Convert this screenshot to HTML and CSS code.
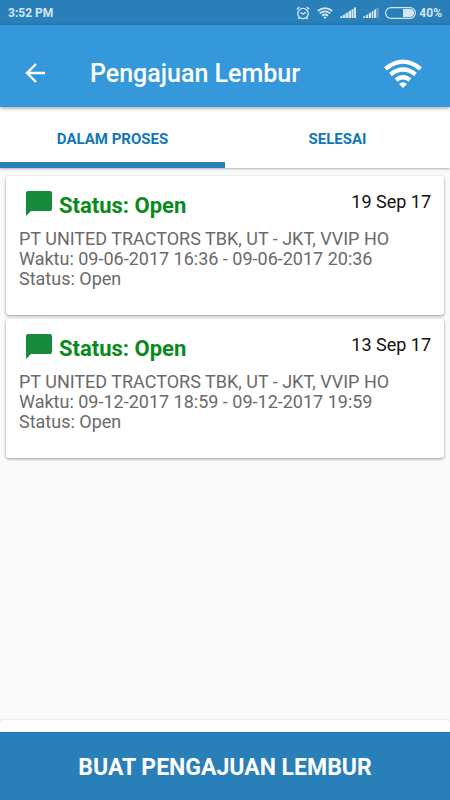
FILE: index.html
```
<!DOCTYPE html>
<html lang="id">
	<head>
		<meta charset="UTF-8">
		<meta name="viewport" content="width=device-width, initial-scale=1">
		<title>Pengajuan Lembur</title>
		<link rel="stylesheet" href="styles.css">
	</head>
	<body>
		<div class="statusbar">
			<span class="clock">3:52 PM</span>
			<svg class="alarm" width="14" height="14" viewBox="0 0 14 14" fill="none" stroke="currentColor" stroke-width="1.3">
				<circle cx="7" cy="7.5" r="5.2"/>
				<path d="M4.5 6.2L7 8.2L9.8 6.2M.8 3.2L3.4 1M13.2 3.2L10.6 1M3.2 11.8L2 13.2M10.8 11.8L12 13.2"/>
			</svg>
			<svg class="wifi-small" width="16" height="12" viewBox="0 0 38 29" fill="none" stroke="currentColor" stroke-width="4.4">
				<path d="M1.5 9.8Q19-4.5 36.5 9.8M6.5 15.5Q19 5.5 31.5 15.5M12 21Q19 15.5 26 21"/>
				<path d="M15 25Q19 21.5 23 25L19 29Z" fill="currentColor" stroke="none"/>
			</svg>
			<svg class="signal" width="16" height="11" viewBox="0 0 16 11" fill="currentColor">
				<path d="M0 11V10L2 9V11ZM3 11V8.5L5 7.5V11ZM6 11V6.5L8 5.2V11ZM9 11V4.5L11 3.2V11ZM12 11V2.5L13 2V11ZM14 11V1L16 0V11Z"/>
				<path d="M0 11V10L16 0V11Z" opacity=".5"/>
			</svg>
			<svg class="signal" width="16" height="11" viewBox="0 0 16 11" fill="currentColor">
				<path d="M0 11V10L2 9V11ZM3 11V8.5L5 7.5V11ZM6 11V6.5L8 5.2V11ZM9 11V4.5L10 4V11ZM11 11V3.2L13 2V11Z"/>
				<path d="M0 11V10L16 0V11Z" opacity=".3"/>
			</svg>
			<svg class="battery" width="31" height="12" viewBox="0 0 31 12">
				<rect x=".6" y=".6" width="29.8" height="10.8" rx="5.4" fill="none" stroke="currentColor" stroke-width="1.2"/>
				<path d="M18 2H25A4 4 0 0 1 25 10H18Z" fill="currentColor"/>
			</svg>
			<span class="percent">40%</span>
		</div>
		<header class="appbar">
			<button class="back" type="button" aria-label="Kembali">
				<svg width="20" height="20" viewBox="0 0 20 20" fill="none" stroke="currentColor" stroke-width="2.4">
					<path d="M20 10H2M11 1L2 10L11 19"/>
				</svg>
			</button>
			<h1 class="title">Pengajuan Lembur</h1>
			<svg class="wifi" width="38" height="29" viewBox="0 0 38 29" fill="none" stroke="currentColor" stroke-width="4.2">
				<path d="M1.5 9.8Q19-4.5 36.5 9.8M6.5 15.5Q19 5.5 31.5 15.5M12 21Q19 15.5 26 21"/>
				<path d="M15 25Q19 21.5 23 25L19 29Z" fill="currentColor" stroke="none"/>
			</svg>
		</header>
		<nav class="tabs">
			<button class="tab active" type="button">DALAM PROSES</button>
			<button class="tab" type="button">SELESAI</button>
		</nav>
		<main class="list">
			<article class="card">
				<div class="card-top">
					<svg class="bubble" width="26" height="25" viewBox="0 0 26 25" fill="currentColor">
						<path d="M2 0H24Q26 0 26 2V18Q26 20 24 20H5L0 25V2Q0 0 2 0Z"/>
					</svg>
					<h2 class="status">Status: Open</h2>
					<time class="date" datetime="2017-09-19">19 Sep 17</time>
				</div>
				<p class="detail">PT UNITED TRACTORS TBK, UT - JKT, VVIP HO</p>
				<p class="detail">Waktu: 09-06-2017 16:36 - 09-06-2017 20:36</p>
				<p class="detail">Status: Open</p>
			</article>
			<article class="card">
				<div class="card-top">
					<svg class="bubble" width="26" height="25" viewBox="0 0 26 25" fill="currentColor">
						<path d="M2 0H24Q26 0 26 2V18Q26 20 24 20H5L0 25V2Q0 0 2 0Z"/>
					</svg>
					<h2 class="status">Status: Open</h2>
					<time class="date" datetime="2017-09-13">13 Sep 17</time>
				</div>
				<p class="detail">PT UNITED TRACTORS TBK, UT - JKT, VVIP HO</p>
				<p class="detail">Waktu: 09-12-2017 18:59 - 09-12-2017 19:59</p>
				<p class="detail">Status: Open</p>
			</article>
		</main>
		<footer class="bottom">
			<button class="create" type="button">BUAT PENGAJUAN LEMBUR</button>
		</footer>
	</body>
</html>
```
FILE: styles.css
```
* {
	box-sizing: border-box;
}
body {
	margin: 0;
	min-height: 100vh;
	display: flex;
	flex-direction: column;
	background: #fafafa;
	font-family: Roboto, "Liberation Sans", sans-serif;
}
h1, h2, p {
	margin: 0;
}
button {
	border: 0;
	padding: 0;
	background: none;
	font-family: inherit;
	cursor: pointer;
}
.statusbar {
	display: flex;
	align-items: center;
	height: 25px;
	padding: 0 8px;
	background: #2980b9;
	color: #d4e6f1;
	font-size: 12px;
	font-weight: 700;
}
.clock {
	flex: 1;
}
.wifi-small {
	margin-left: 7px;
}
.signal {
	margin-left: 7px;
}
.battery {
	margin-left: 6px;
}
.percent {
	margin-left: 3px;
}
.appbar {
	display: flex;
	align-items: center;
	height: 82px;
	padding: 14px 28px 0 25px;
	background: #3498db;
	color: #fff;
	box-shadow: 0 1px 4px rgba(0, 0, 0, .4);
	z-index: 1;
}
.back {
	display: flex;
	color: inherit;
}
.title {
	flex: 1;
	margin-left: 45px;
	font-size: 25px;
	font-weight: 500;
}
.tabs {
	display: flex;
	height: 61px;
	background: #fff;
	box-shadow: 0 1px 2px rgba(0, 0, 0, .3);
}
.tab {
	flex: 1;
	padding-top: 2px;
	border-top: 6px solid transparent;
	border-bottom: 6px solid transparent;
	color: #1177b5;
	font-size: 15px;
	font-weight: 700;
}
.tab.active {
	border-bottom-color: #2980b9;
}
.list {
	flex: 1;
	display: flex;
	flex-direction: column;
	gap: 4px;
	padding: 8px 6px;
}
.card {
	padding: 15px 13px 26px;
	border-radius: 3px;
	background: #fff;
	box-shadow: 0 1px 3px rgba(0, 0, 0, .4);
}
.card-top {
	display: flex;
	align-items: flex-start;
	height: 38px;
}
.bubble {
	margin: 0 7px;
	color: #178a3c;
}
.status {
	flex: 1;
	color: #0a8a1c;
	font-size: 22px;
	font-weight: 700;
	line-height: 30px;
}
.date {
	color: #111;
	font-size: 18px;
	line-height: 22px;
}
.detail {
	color: #6a6a6a;
	font-size: 18px;
	line-height: 20px;
}
.bottom {
	padding-top: 12px;
	border-radius: 3px 3px 0 0;
	background: #fff;
	box-shadow: 0 0 2px rgba(0, 0, 0, .2);
}
.create {
	display: block;
	width: 100%;
	height: 68px;
	padding-top: 2px;
	border-top: 1px solid #0f78b7;
	background: #2980b9;
	color: #fff;
	font-size: 23px;
	font-weight: 700;
}
```
